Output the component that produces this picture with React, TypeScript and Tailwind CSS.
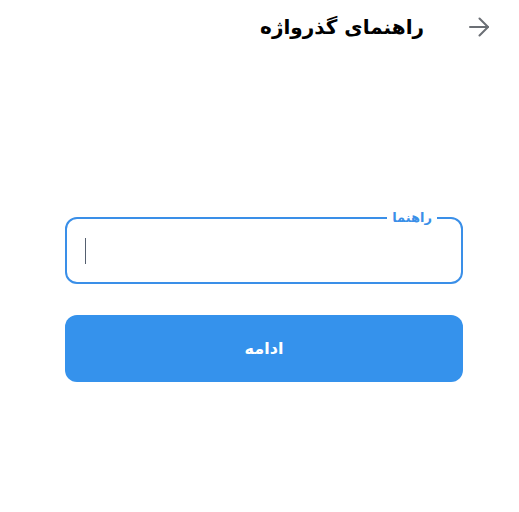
export default function App() {
	return (
		<div
			dir="rtl"
			className="min-h-[512px] w-full bg-white"
			style={{ fontFamily: '"DejaVu Sans", "Noto Sans", sans-serif' }}
		>
			<header className="flex h-[53px] items-center gap-[45px] pr-[30px]">
				<button className="flex h-5 w-5 items-center justify-center text-[#6b6f75]">
					<svg
						width="20"
						height="20"
						viewBox="0 0 20 20"
						fill="none"
						stroke="currentColor"
						strokeWidth="2"
						strokeLinecap="round"
						strokeLinejoin="round"
					>
						<path d="M1 10h18" />
						<path d="M10.5 1.5 19 10l-8.5 8.5" />
					</svg>
				</button>
				<h1 className="text-[20px] font-bold leading-[28px] text-black">
					راهنمای گذرواژه
				</h1>
			</header>

			<div className="mt-[164px] ml-[56px] mr-[56px] flex w-[398px] flex-col gap-[31px]">
				<div className="relative h-[67px] rounded-xl border-2 border-[#3a8fe8]">
					<span className="absolute -top-[9px] right-[24px] bg-white px-[5px] text-[13px] font-bold leading-[16px] text-[#3a8fe8]">
						راهنما
					</span>
					<div className="flex h-full items-center justify-end pl-[18px]">
						<div className="h-[26px] w-px bg-[#556070]" />
					</div>
				</div>
				<button className="h-[67px] w-full rounded-xl bg-[#3592ec] text-[16px] font-bold text-white">
					ادامه
				</button>
			</div>
		</div>
	);
}
